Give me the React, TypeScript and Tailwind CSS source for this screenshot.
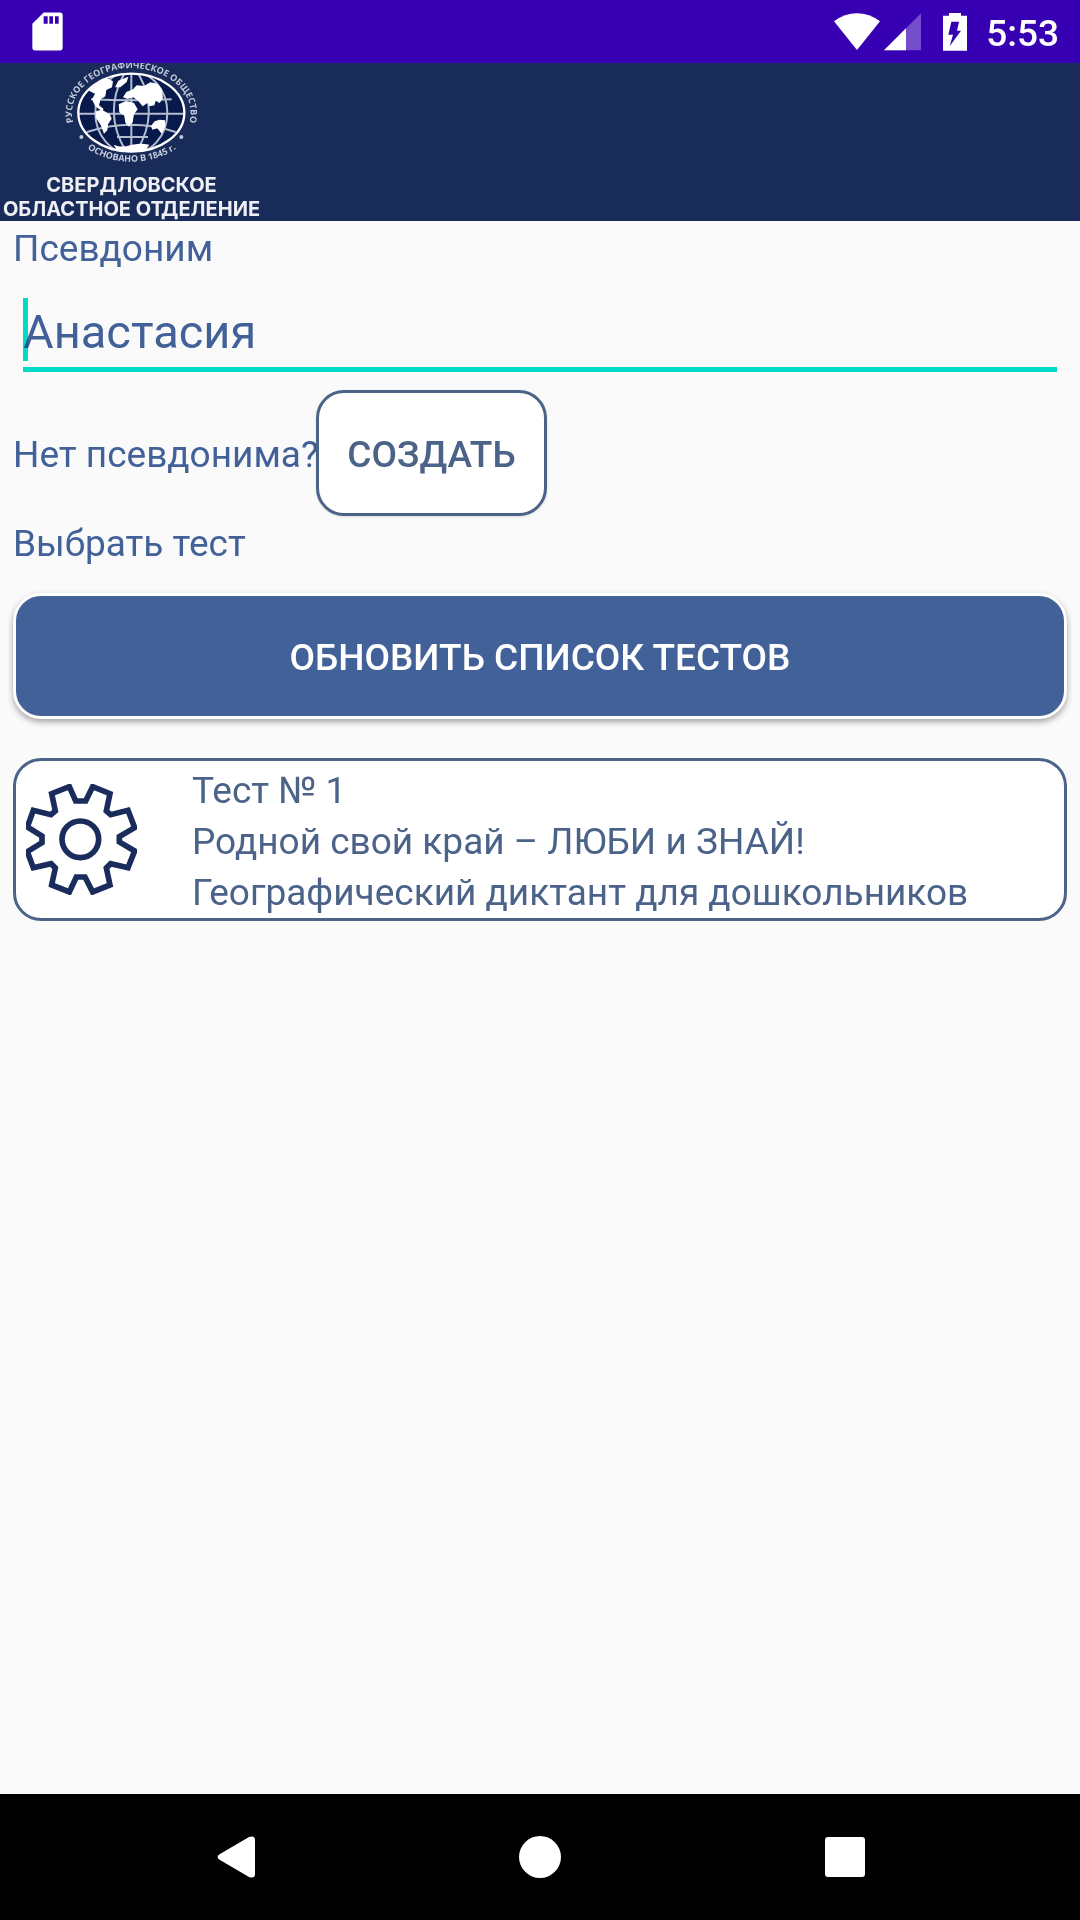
import { useState } from "react";

function SdCardIcon() {
  return (
    <svg aria-hidden="true" className="h-[39px] w-[31px]" viewBox="96 37 93 116">
      <path
        d="M131 38H180Q188 38 188 46V143Q188 152 180 152H106Q97 152 97 143V72Z"
        fill="#fff"
      />
      <path d="M131 49h12v23h-12zM148 49h11v23h-11zM165 49h11v23h-11z" fill="#3700b3" />
    </svg>
  );
}

function WifiIcon() {
  return (
    <svg aria-hidden="true" className="h-[38px] w-[46px]" viewBox="102 37 138 114">
      <path d="M102 62Q134 38 171 38T240 62L171 148Z" fill="#fff" />
    </svg>
  );
}

function SignalIcon() {
  return (
    <svg aria-hidden="true" className="h-[38px] w-[37px]" viewBox="254 37 111 114">
      <path d="M254 149L365 38V149Z" fill="#fff" opacity="0.3" />
      <path d="M254 149L320 83V149Z" fill="#fff" />
    </svg>
  );
}

function BatteryIcon() {
  return (
    <svg aria-hidden="true" className="h-[38px] w-[24px]" viewBox="429 37 72 114">
      <path d="M447 37H483V45H501V150H429V45H447Z" fill="#fff" />
      <path d="M454 63H477L471 90H483L449 137L459 102H445Z" fill="#3700b3" />
    </svg>
  );
}

function GlobeEmblem() {
  return (
    <svg
      role="img"
      aria-label="Русское географическое общество"
      className="h-[103px] w-[137px]"
      viewBox="190 189 411 309"
    >
      <defs>
        <path id="ring-top" d="M231 392A178 135 0 1 1 559 392" />
        <path id="ring-bottom" d="M255 440A198 150 0 0 0 538 440" />
        <clipPath id="globe-clip">
          <ellipse cx="395" cy="338" rx="158" ry="117" />
        </clipPath>
      </defs>
      <ellipse cx="395" cy="338" rx="158" ry="117" fill="#081a4b" />
      <g clipPath="url(#globe-clip)">
        <g fill="none" stroke="#b4bdd0" strokeWidth="6">
          <path d="M395 221V455M237 341H553M274 298Q395 304 516 298M262 396Q395 352 528 396M352 411H445" />
          <path d="M372 224Q310 338 378 452M418 224Q480 338 412 452" />
          <ellipse cx="395" cy="338" rx="108" ry="124" />
        </g>
        <g fill="#fff">
          <path d="M268 272L285 246L322 234L340 244L337 262L320 270L317 289L303 298L298 316L312 327L306 333L286 318L277 298L286 281Z" />
          <path d="M346 262L356 242L386 230L381 246L362 262Z" />
          <path d="M288 334L307 329L330 343L336 356L325 373L323 391L313 401L303 375L288 353Z" />
          <path d="M370 292L380 276L400 268L411 256L433 258L452 247L474 251L486 268L490 294L480 309L468 302L464 316L450 319L443 309L429 319L414 301L400 292L384 297Z" />
          <path d="M357 313L379 303L403 309L414 328L403 343L399 366L388 380L377 368L374 347L359 337Z" />
          <path d="M454 378L465 364L480 359L496 361L497 379L486 401L473 385L458 389Z" />
          <path d="M342 434Q365 444 391 436T449 434L435 456H355Z" />
        </g>
      </g>
      <ellipse cx="395" cy="338" rx="159" ry="117" fill="none" stroke="#fff" strokeWidth="7" />
      <g
        fill="#c3cad9"
        fontFamily="Open Sans, sans-serif"
        fontSize="27"
        fontWeight="700"
        textAnchor="middle"
      >
        <text>
          <textPath href="#ring-top" startOffset="50%">
            РУССКОЕ ГЕОГРАФИЧЕСКОЕ ОБЩЕСТВО
          </textPath>
        </text>
        <text>
          <textPath href="#ring-bottom" startOffset="50%">
            ОСНОВАНО В 1845 г.
          </textPath>
        </text>
      </g>
      <circle cx="245" cy="411" r="6" fill="#c3cad9" />
      <circle cx="545" cy="411" r="6" fill="#c3cad9" />
    </svg>
  );
}

function GearIcon() {
  return (
    <svg aria-hidden="true" className="h-[111px] w-[111px] shrink-0" viewBox="78 129 333 333">
      <g fill="none" stroke="#1a2c5b" strokeWidth="17">
        <path d="M208 137L155 158L166 210L153 221L100 208L82 258L126 285V305L82 332L100 380L153 368L166 381L155 432L208 453L229 408H255L278 453L330 432L319 381L332 368L384 380L404 330L358 303V287L404 260L384 208L332 221L319 210L330 158L278 137L257 180H227Z" />
        <circle cx="241" cy="295" r="55" />
      </g>
    </svg>
  );
}

function StatusBar() {
  return (
    <div className="flex h-[63px] items-center bg-[#3700b3] pr-[21px] pl-8">
      <SdCardIcon />
      <div className="ml-auto flex items-center">
        <WifiIcon />
        <span className="ml-1">
          <SignalIcon />
        </span>
        <span className="ml-[22px]">
          <BatteryIcon />
        </span>
        <span className="ml-[19px] pt-1 text-[37px] leading-[43px] font-medium text-white">
          5:53
        </span>
      </div>
    </div>
  );
}

function Header() {
  return (
    <header className="flex h-[158px] items-start bg-[#192b59]">
      <div className="flex w-[263px] flex-col items-center">
        <GlobeEmblem />
        <p className="mt-[7px] text-center font-[Inter,sans-serif] text-[20px] leading-[24px] font-bold whitespace-nowrap text-[#eef0f5]">
          СВЕРДЛОВСКОЕ
          <br />
          ОБЛАСТНОЕ ОТДЕЛЕНИЕ
        </p>
      </div>
    </header>
  );
}

const testLines = [
  "Тест № 1",
  "Родной свой край – ЛЮБИ и ЗНАЙ!",
  "Географический диктант для дошкольников",
];

function NavBar() {
  return (
    <nav className="flex h-[126px] items-center justify-center gap-[264px] bg-black pl-px">
      <button type="button" aria-label="Назад">
        <svg className="h-[42px] w-[38px]" viewBox="0 0 38 42">
          <path d="M3 18L32 1Q38 -1 38 4V38Q38 43 32 41L3 24Q-2 21 3 18Z" fill="#fff" />
        </svg>
      </button>
      <button type="button" aria-label="Домой" className="h-[42px] w-[42px] rounded-full bg-white" />
      <button type="button" aria-label="Недавние" className="h-10 w-10 rounded-[3px] bg-white" />
    </nav>
  );
}

export default function App() {
  const [name, setName] = useState("Анастасия");

  return (
    <div className="flex min-h-screen flex-col bg-[#fafafa] font-[Roboto,sans-serif] text-[37px] leading-[51px] text-[#426198]">
      <StatusBar />
      <Header />
      <main className="flex flex-1 flex-col px-[13px]">
        <label htmlFor="nickname" className="pt-[2px]">
          Псевдоним
        </label>
        <div className="relative mx-[10px] mt-6">
          <input
            id="nickname"
            type="text"
            value={name}
            onChange={(e) => setName(e.target.value)}
            className="block h-[74px] w-full border-b-5 border-[#03dac5] bg-transparent pb-[2px] text-[47px] caret-[#03dac5] outline-none"
          />
          <span className="absolute top-0 left-0 h-[63px] w-[5px] bg-[#03dac5] mix-blend-darken" />
        </div>
        <div className="mt-[18px] flex items-center">
          <span className="w-[303px] pt-[2px] whitespace-nowrap">Нет псевдонима?</span>
          <button
            type="button"
            className="h-[126px] w-[231px] rounded-[28px] border-3 border-[#4b6389] bg-white pt-[2px] font-medium text-[#4b6389] shadow-sm"
          >
            СОЗДАТЬ
          </button>
        </div>
        <h2 className="mt-[2px]">Выбрать тест</h2>
        <button
          type="button"
          className="mt-6 h-[126px] w-full rounded-[28px] border-3 border-white bg-[#426198] pt-[2px] font-medium text-white shadow-[0_3px_6px_rgba(0,0,0,0.35)]"
        >
          ОБНОВИТЬ СПИСОК ТЕСТОВ
        </button>
        <button
          type="button"
          className="mt-[39px] flex w-full items-center rounded-[28px] border-3 border-[#4b6389] bg-white pl-[10px] text-left text-[#4b6389]"
        >
          <GearIcon />
          <span className="ml-[55px] flex flex-col pt-1">
            {testLines.map((line) => (
              <span key={line}>{line}</span>
            ))}
          </span>
        </button>
      </main>
      <NavBar />
    </div>
  );
}
